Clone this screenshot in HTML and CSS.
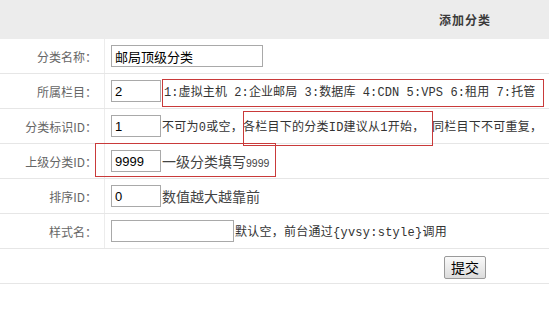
FILE: index.html
```html
<!DOCTYPE html>
<html lang="zh-CN">
<head>
    <meta charset="UTF-8">
    <meta name="viewport" content="width=device-width, initial-scale=1.0">
    <title>添加分类</title>
    <link rel="stylesheet" href="styles.css">
</head>
<body>
    <div class="page">
        <table class="form-table">
            <tr>
                <th colspan="2" class="title">添加分类</th>
            </tr>
            <tr>
                <td class="label">分类名称：</td>
                <td class="field"><div class="line"><input type="text" class="txt w-long" value="邮局顶级分类"></div></td>
            </tr>
            <tr>
                <td class="label">所属栏目：</td>
                <td class="field"><div class="line"><input type="text" class="txt w-short" value="2"><span class="hint mono type-list">1:虚拟主机 2:企业邮局 3:数据库 4:CDN 5:VPS 6:租用 7:托管</span></div></td>
            </tr>
            <tr>
                <td class="label">分类标识ID：</td>
                <td class="field"><div class="line"><input type="text" class="txt w-short" value="1"><span class="hint mono">不可为0或空，各栏目下的分类ID建议从1开始， 同栏目下不可重复，</span></div></td>
            </tr>
            <tr>
                <td class="label">上级分类ID：</td>
                <td class="field"><div class="line"><input type="text" class="txt w-short" value="9999"><span class="hint big">一级分类填写<span class="num">9999</span></span></div></td>
            </tr>
            <tr>
                <td class="label">排序ID：</td>
                <td class="field"><div class="line"><input type="text" class="txt w-short" value="0"><span class="hint big">数值越大越靠前</span></div></td>
            </tr>
            <tr>
                <td class="label">样式名：</td>
                <td class="field"><div class="line"><input type="text" class="txt w-mid" value=""><span class="hint mono">默认空，前台通过{yvsy:style}调用</span></div></td>
            </tr>
            <tr>
                <td colspan="2" class="actions"><button type="submit" class="btn">提交</button></td>
            </tr>
        </table>

        <!-- red annotation boxes -->
        <span class="mark mark-type"></span>
        <span class="mark mark-rule"></span>
        <span class="mark mark-parent"></span>
    </div>
</body>
</html>
```

FILE: styles.css
```css
body {
    margin: 0;
    background-color: #fff;
    font-family: "Noto Sans CJK SC", sans-serif;
    font-size: 12px;
    color: #333;
}
.page {
    position: relative;
    width: 549px;
    height: 325px;
    overflow: hidden;
}
.form-table {
    width: 930px;
    border-collapse: collapse;
}
.title {
    height: 39px;
    padding: 0;
    background-color: #ececec;
    color: #3a3a3a;
    font-size: 12px;
    font-weight: bold;
    letter-spacing: 1px;
    text-align: center;
}
.form-table td {
    height: 34px;
    padding: 0;
    border-bottom: 1px solid #e6e6e6;
}
.label {
    width: 97px;
    padding-right: 7px !important;
    border-right: 1px solid #ececec;
    color: #666;
    text-align: right;
    white-space: nowrap;
}
.field {
    padding-left: 6px !important;
}
.line {
    display: flex;
    align-items: center;
    white-space: pre;
}
.txt {
    box-sizing: border-box;
    height: 22px;
    margin: 0;
    padding: 0 3px;
    border: 1px solid #a9a9a9;
    font-family: "Liberation Sans", "Noto Sans CJK SC", sans-serif;
    font-size: 13px;
    color: #000;
    background: #fff;
}
.w-long {
    width: 152px;
}
.w-mid {
    width: 123px;
}
.w-short {
    width: 50px;
}
.hint {
    color: #333;
}
.mono {
    font-family: "Liberation Mono", "Noto Sans CJK SC", monospace;
    font-size: 12px;
    letter-spacing: 0.25px;
    margin-left: 1px;
}
.type-list {
    margin-left: 3px;
    letter-spacing: 0.1px;
}
.big {
    font-size: 14px;
    color: #444;
    margin-left: 1px;
}
.num {
    font-family: "Liberation Sans", sans-serif;
    font-size: 10.5px;
}
.form-table td.actions {
    height: 34px;
    text-align: center;
}
.btn {
    width: 42px;
    height: 23px;
    margin-top: 2px;
    padding: 0;
    border: 1px solid #9a9a9a;
    border-radius: 2px;
    background: linear-gradient(#fafafa, #dcdcdc);
    font-family: "Noto Sans CJK SC", sans-serif;
    font-size: 14px;
    color: #000;
}
.mark {
    position: absolute;
    box-sizing: border-box;
    border: 1px solid #c93a3a;
}
.mark-type {
    left: 162px;
    top: 79px;
    width: 382px;
    height: 28px;
}
.mark-rule {
    left: 243px;
    top: 111px;
    width: 190px;
    height: 35px;
}
.mark-parent {
    left: 95px;
    top: 143px;
    width: 181px;
    height: 34px;
}
```
